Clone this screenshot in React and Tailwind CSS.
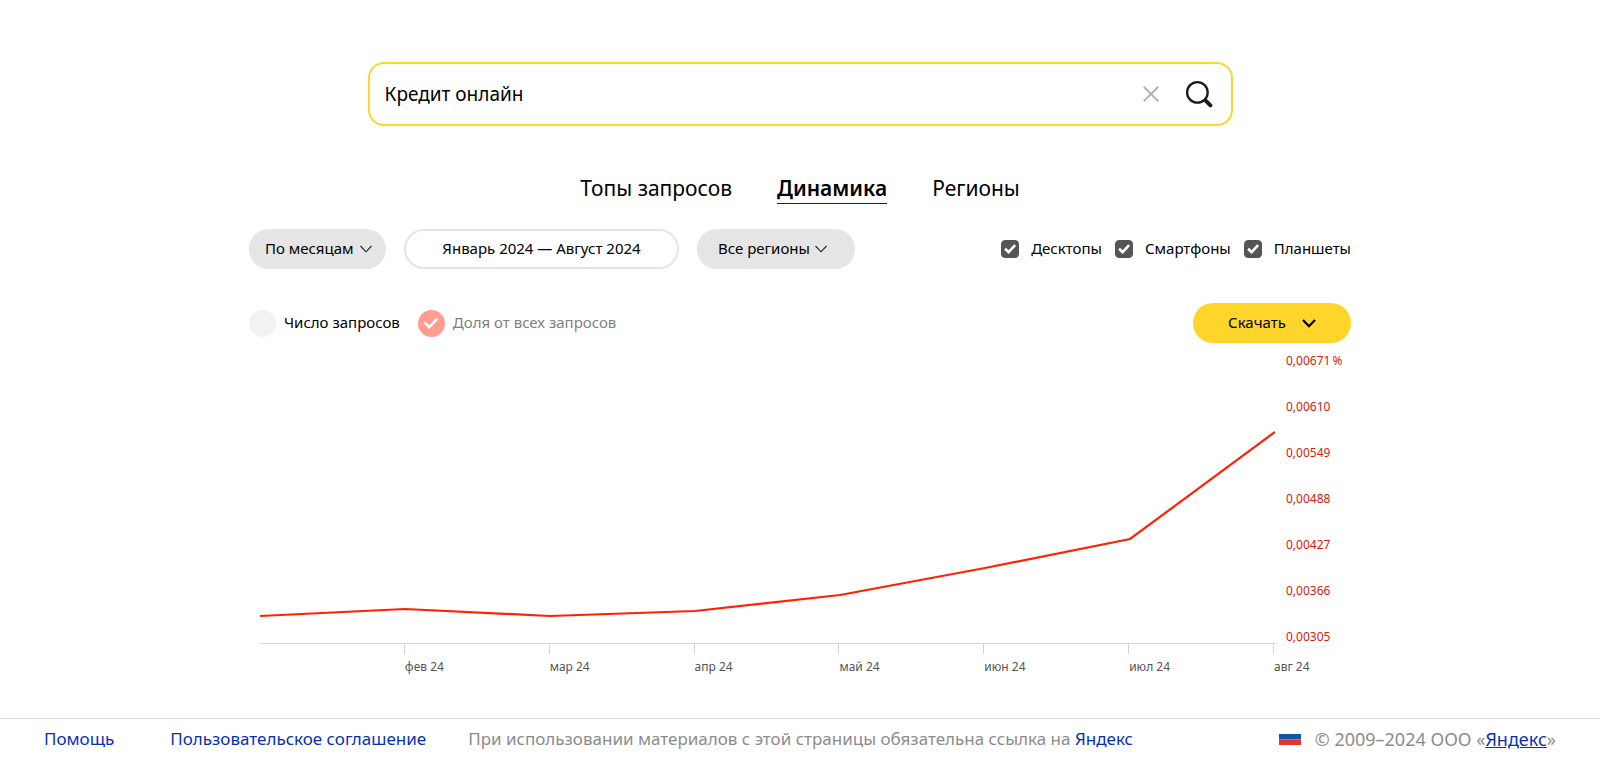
import React, { useState } from "react";

const TABS = ["Топы запросов", "Динамика", "Регионы"];
const DEVICES = ["Десктопы", "Смартфоны", "Планшеты"];
const SCALE = ["0,00671\u2009%", "0,00610", "0,00549", "0,00488", "0,00427", "0,00366", "0,00305"];
const MONTHS = ["фев 24", "мар 24", "апр 24", "май 24", "июн 24", "июл 24", "авг 24"];
const POINTS = "0,257 145,250 290,257 435,252 580,236 725,209 870,180 1015,73";

function Check({ className }) {
  return (
    <svg viewBox="0 0 18 18" className={className} fill="none" stroke="currentColor" aria-hidden="true">
      <path d="M4.1 8.8 7.6 12.2 14.1 5.2" strokeWidth="2.6" />
    </svg>
  );
}

function PillSelect({ label, options, className, padding, arrow }) {
  return (
    <div className={`grid h-10 items-center rounded-full bg-[#e5e5e5] ${className}`}>
      <select
        aria-label={label}
        className={`col-start-1 row-start-1 h-10 w-full appearance-none rounded-full pb-0.5 text-[15px] text-black ${padding}`}
      >
        {options.map((o) => (
          <option key={o}>{o}</option>
        ))}
      </select>
      <svg
        viewBox="0 0 12 8"
        className={`pointer-events-none col-start-1 row-start-1 h-2 w-3 justify-self-end ${arrow}`}
        fill="none"
        stroke="#222"
        strokeWidth="1.1"
        aria-hidden="true"
      >
        <path d="M.5 1 6 6.8 11.5 1" />
      </svg>
    </div>
  );
}

function DeviceCheckbox({ label }) {
  return (
    <label className="flex items-center gap-3 text-[15px]">
      <span className="grid size-[18px]">
        <input
          type="checkbox"
          defaultChecked
          className="peer col-start-1 row-start-1 size-[18px] appearance-none rounded border border-[#555] checked:bg-[#555]"
        />
        <Check className="pointer-events-none invisible col-start-1 row-start-1 size-[18px] text-white peer-checked:visible" />
      </span>
      <span className="pb-0.5">{label}</span>
    </label>
  );
}

function SeriesToggle({ label, checked, disabled }) {
  return (
    <label className={`flex items-center gap-2 text-[15px] ${disabled ? "text-[#808080]" : "text-black"}`}>
      <span className="grid size-[27px] place-items-center">
        <input
          type="checkbox"
          defaultChecked={checked}
          disabled={disabled}
          className="peer col-start-1 row-start-1 size-[27px] appearance-none rounded-full bg-[#f2f2f2] checked:bg-[#ff9d93]"
        />
        <svg
          viewBox="0 0 14 11"
          className="pointer-events-none invisible col-start-1 row-start-1 h-[11px] w-[14px] peer-checked:visible"
          fill="none"
          stroke="#fff"
          strokeWidth="2.6"
          strokeLinecap="round"
          strokeLinejoin="round"
          aria-hidden="true"
        >
          <path d="M1.4 5.2 5.2 9.2 12.6 1.4" />
        </svg>
      </span>
      <span className="pb-0.5">{label}</span>
    </label>
  );
}

export default function App() {
  const [query, setQuery] = useState("Кредит онлайн");

  return (
    <div className="flex min-h-screen flex-col bg-white font-['Noto_Sans',sans-serif] text-black">
      <main className="mx-auto w-full max-w-[1102px] grow pt-[62px]">
        <form
          role="search"
          onSubmit={(e) => e.preventDefault()}
          className="mx-auto flex h-16 max-w-[865px] items-center rounded-2xl border-2 border-[#ffd42b] pr-4 pl-[15px]"
        >
          <input
            type="text"
            aria-label="Запрос"
            value={query}
            onChange={(e) => setQuery(e.target.value)}
            className="min-w-0 grow text-[19px] outline-none"
          />
          <button type="button" aria-label="Очистить" onClick={() => setQuery("")} className="p-2">
            <svg viewBox="0 0 16 16" className="size-4" stroke="#b3b3b3" strokeWidth="2" aria-hidden="true">
              <path d="M.8.8 15.2 15.2M15.2.8.8 15.2" />
            </svg>
          </button>
          <button type="submit" aria-label="Найти" className="ml-4 p-0.5">
            <svg viewBox="0 0 28 28" className="size-7" fill="none" stroke="#1a1a1a" aria-hidden="true">
              <circle cx="12.4" cy="12.4" r="10.3" strokeWidth="2.3" />
              <path d="M20.4 20.4 25.4 25.4" strokeWidth="4" strokeLinecap="round" />
            </svg>
          </button>
        </form>

        <nav className="mt-12 flex h-[30px] justify-center gap-[45px] text-[21px] leading-7">
          {TABS.map((t) => (
            <a
              key={t}
              href="#"
              className={t === "Динамика" ? "border-b border-[#222] font-semibold" : ""}
            >
              {t}
            </a>
          ))}
        </nav>

        <div className="mt-[25px] flex items-center gap-[18px]">
          <PillSelect
            label="Группировка"
            options={["По месяцам", "По неделям", "По дням"]}
            className="w-[137px]"
            padding="pl-4"
            arrow="mr-[14px]"
          />
          <button type="button" className="h-10 w-[275px] rounded-full border-2 border-[#e5e5e5] pb-0.5 text-[15px]">
            Январь 2024 — Август 2024
          </button>
          <PillSelect
            label="Регион"
            options={["Все регионы", "Москва", "Санкт-Петербург"]}
            className="w-[158px]"
            padding="pl-[21px]"
            arrow="mr-7"
          />
          <div className="ml-auto flex gap-[13px]">
            {DEVICES.map((d) => (
              <DeviceCheckbox key={d} label={d} />
            ))}
          </div>
        </div>

        <div className="mt-[34px] flex items-center gap-[18px]">
          <SeriesToggle label="Число запросов" />
          <SeriesToggle label="Доля от всех запросов" checked disabled />
          <button
            type="button"
            className="ml-auto flex h-10 w-[158px] items-center justify-center gap-4 rounded-full bg-[#ffd42b] text-[15px]"
          >
            <span className="pb-0.5">Скачать</span>
            <svg viewBox="0 0 14 9" className="h-[9px] w-[14px]" fill="none" stroke="#000" strokeWidth="2.2" aria-hidden="true">
              <path d="M1 1 7 7.2 13 1" />
            </svg>
          </button>
        </div>

        <section aria-label="График" className="flex pl-[11px]">
          <div className="min-w-0 grow pt-4">
            <svg
              viewBox="0 0 1015 284"
              preserveAspectRatio="none"
              className="block h-[284px] w-full"
              role="img"
              aria-label="Доля от всех запросов по месяцам"
            >
              <polyline
                points={POINTS}
                fill="none"
                stroke="#ff2200"
                strokeWidth="2.2"
                vectorEffect="non-scaling-stroke"
              />
            </svg>
            <div className="grid grid-cols-7 border-t border-[#ccd6eb] pr-px">
              {MONTHS.map((m) => (
                <div key={m}>
                  <div className="h-[10px] border-r border-[#ccd6eb]" />
                  <div className="flex justify-end text-xs leading-[26px] text-[#555]">
                    <span className="w-0 whitespace-nowrap">{m}</span>
                  </div>
                </div>
              ))}
            </div>
          </div>
          <ul className="w-[76px] pl-[11px] text-xs leading-[46px] whitespace-nowrap text-[#d4200c]">
            {SCALE.map((s, i) => (
              <li key={s} className={i === 0 ? "pb-[5px] leading-9" : ""}>
                {s}
              </li>
            ))}
          </ul>
        </section>
      </main>

      <footer className="flex items-center border-t border-[#d9d9d9] px-11 pt-[7px] pb-2 text-[17px] leading-[26px] text-[#8c8c8c]">
        <a href="#" className="text-[#0a2fb4]">Помощь</a>
        <a href="#" className="ml-14 text-[#0a2fb4]">Пользовательское соглашение</a>
        <p className="ml-[42px]">
          При использовании материалов с этой страницы обязательна ссылка на{" "}
          <a href="#" className="text-[#0a2fb4]">Яндекс</a>
        </p>
        <svg viewBox="0 0 22 23" className="ml-auto h-[23px] w-[22px]" aria-label="Россия" role="img">
          <path fill="#fff" d="M0 0h22v6H0z" />
          <path fill="#0b57a8" d="M0 6h22v5.5H0z" />
          <path fill="#e8322f" d="M0 11.5h22V17H0z" />
        </svg>
        <p className="ml-[14px] text-lg leading-[26px]">
          © 2009–2024 ООО «<a href="#" className="text-[#0a2fb4] underline">Яндекс</a>»
        </p>
      </footer>
    </div>
  );
}
